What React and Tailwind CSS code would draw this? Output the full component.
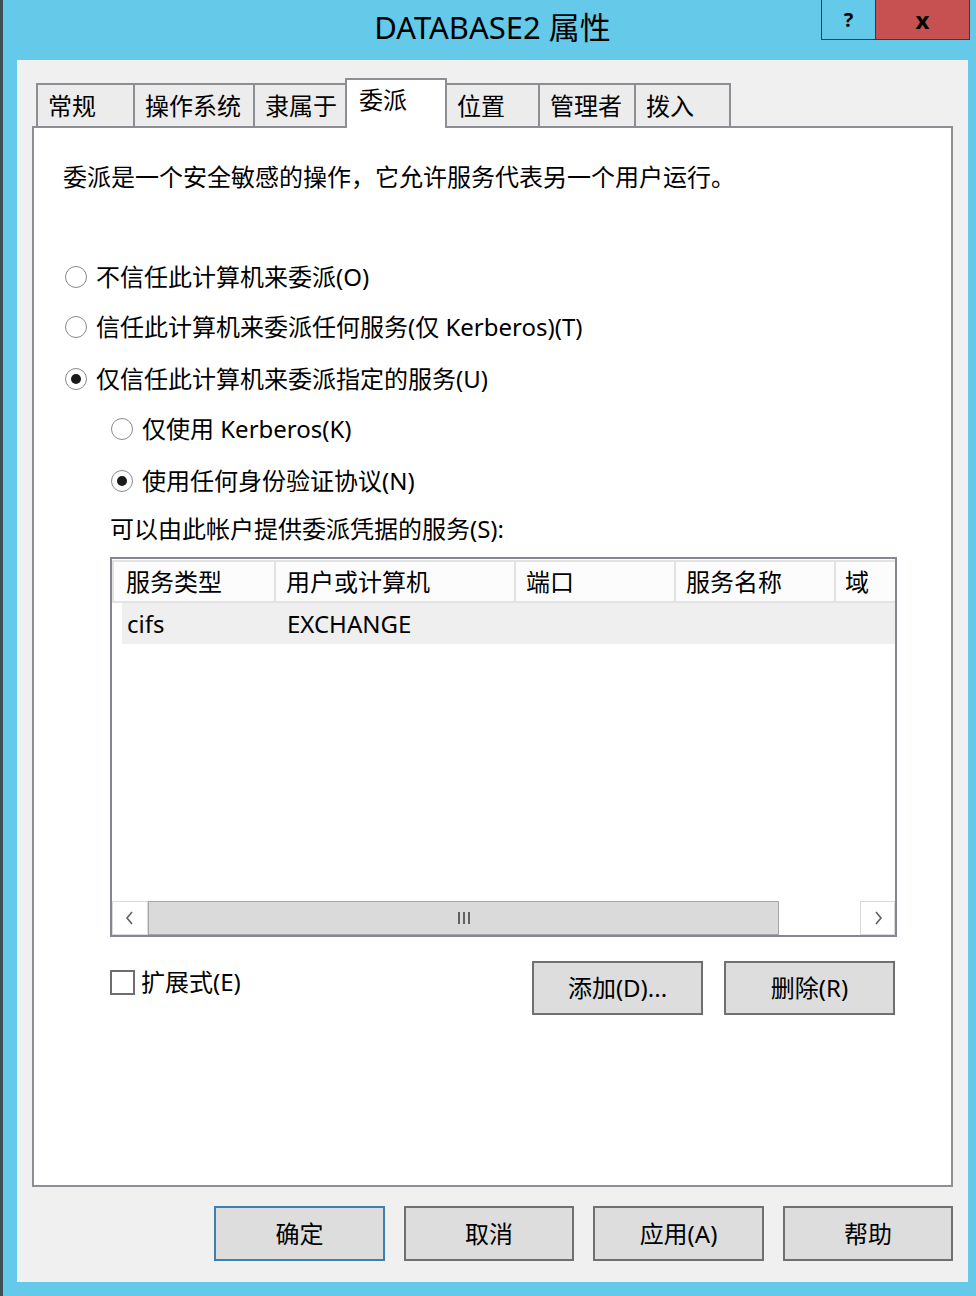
import React from "react";

const tabs = [
  { label: "常规", w: "w-[97px]" },
  { label: "操作系统", w: "w-[120px]" },
  { label: "隶属于", w: "w-[92px]" },
  { label: "委派", w: "w-[102px]", active: true },
  { label: "位置", w: "w-[93px]" },
  { label: "管理者", w: "w-[96px]" },
  { label: "拨入", w: "w-[97px]", last: true },
];

const columns = [
  { label: "服务类型", w: "w-[162px]", pl: "pl-[12px]" },
  { label: "用户或计算机", w: "w-[240px]", pl: "pl-[10px]" },
  { label: "端口", w: "w-[160px]", pl: "pl-[10px]" },
  { label: "服务名称", w: "w-[160px]", pl: "pl-[10px]" },
  { label: "域", w: "flex-1", pl: "pl-[9px]" },
];

const Radio = ({ checked }) => (
  <span className="w-[22px] h-[22px] rounded-full border-[1.5px] border-[#8a8a8a] bg-white flex items-center justify-center shrink-0">
    {checked && <span className="w-[10px] h-[10px] rounded-full bg-[#1a1a1a]" />}
  </span>
);

const RadioRow = ({ checked, label, indent, className = "" }) => (
  <div className={`h-[50px] flex items-center ${indent ? "pl-[46px]" : ""} ${className}`}>
    <Radio checked={checked} />
    <span className="ml-[9px]">{label}</span>
  </div>
);

const Button = ({ children, w = "w-[171px]", h = "h-[54px]", focus }) => (
  <div
    className={`${w} ${h} bg-[#dddddd] border-2 ${focus ? "border-[#3c7fb1]" : "border-[#707070]"} flex items-center justify-center`}
  >
    {children}
  </div>
);

const Chevron = ({ dir }) => (
  <svg width="10" height="16" viewBox="0 0 10 16">
    <polyline
      points={dir === "left" ? "7,2 2,8 7,14" : "3,2 8,8 3,14"}
      fill="none"
      stroke="#606060"
      strokeWidth="1.6"
    />
  </svg>
);

export default function App() {
  return (
    <div className="w-[976px] h-[1296px] bg-[#65c9e9] border-l-[3px] border-[#3d4f57] text-black [font-family:'Noto_Sans','Noto_Sans_CJK_SC',sans-serif] text-[24px] leading-[32px] overflow-hidden">
      {/* title bar */}
      <div className="relative h-[60px] flex items-center justify-center">
        <span className="text-[31px] leading-[40px] -mt-[6px] ml-[6px]">DATABASE2 属性</span>
        <div className="absolute top-0 right-[6px] flex h-[40px] border border-t-0 border-[#3a3a3a]">
          <div className="w-[54px] flex items-center justify-center font-bold text-[20px] border-r border-[#3a3a3a]">?</div>
          <div className="w-[93px] bg-[#c75050] flex items-center justify-center font-bold text-[24px]">x</div>
        </div>
      </div>

      {/* client area */}
      <div className="ml-[14px] w-[951px] h-[1222px] bg-[#f0f0f0] px-[15px] pt-[18px]">
        {/* tabs */}
        <div className="flex items-end h-[50px] pl-[4px]">
          {tabs.map((t) =>
            t.active ? (
              <div
                key={t.label}
                className={`${t.w} h-[50px] relative z-10 bg-white border-2 border-b-0 border-[#8c8e94] -mr-[2px] pl-[12px] pt-[4px]`}
              >
                {t.label}
              </div>
            ) : (
              <div
                key={t.label}
                className={`${t.w} h-[43px] mb-[2px] bg-[#ececec] border-t-2 border-l-2 ${t.last ? "border-r-2" : ""} border-[#8c8e94] pl-[10px] pt-[5px]`}
              >
                {t.label}
              </div>
            )
          )}
        </div>

        {/* panel */}
        <div className="-mt-[2px] h-[1061px] bg-white border-2 border-[#8c8e94] pl-[31px] pt-[33px]">
          <div className="-ml-[2px]">委派是一个安全敏感的操作，它允许服务代表另一个用户运行。</div>

          <div className="mt-[59px]">
            <RadioRow label="不信任此计算机来委派(O)" />
            <RadioRow label="信任此计算机来委派任何服务(仅 Kerberos)(T)" />
            <RadioRow checked label="仅信任此计算机来委派指定的服务(U)" className="mt-[2px]" />
            <RadioRow indent label="仅使用 Kerberos(K)" />
            <RadioRow indent checked label="使用任何身份验证协议(N)" className="mt-[2px]" />
            <div className="h-[46px] flex items-center pl-[45px]">可以由此帐户提供委派凭据的服务(S):</div>
          </div>

          {/* list view */}
          <div className="ml-[45px] mt-[5px] w-[787px] h-[380px] border-2 border-[#828790] flex flex-col">
            <div className="flex h-[43px] border-t-2 border-b-2 border-[#e3e3e3] mt-[1px]">
              {columns.map((c) => (
                <div
                  key={c.label}
                  className={`${c.w} ${c.pl} bg-[#fcfcfc] border-l-2 border-[#e3e3e3] flex items-center`}
                >
                  {c.label}
                </div>
              ))}
            </div>
            <div className="flex h-[41px] ml-[10px] bg-[#efefef] items-center">
              <div className="w-[160px] pl-[5px]">cifs</div>
              <div className="pl-[5px]">EXCHANGE</div>
            </div>
            <div className="flex-1" />
            {/* horizontal scrollbar */}
            <div className="flex h-[34px]">
              <div className="w-[36px] border border-[#dadada] bg-white flex items-center justify-center">
                <Chevron dir="left" />
              </div>
              <div className="w-[631px] bg-[#dadada] border border-[#a6a6a6] flex items-center justify-center">
                <svg width="16" height="14" viewBox="0 0 16 14">
                  <rect x="2" y="1" width="2" height="12" fill="#606060" />
                  <rect x="7" y="1" width="2" height="12" fill="#606060" />
                  <rect x="12" y="1" width="2" height="12" fill="#606060" />
                </svg>
              </div>
              <div className="w-[81px] bg-white" />
              <div className="flex-1 border border-[#dadada] bg-white flex items-center justify-center">
                <Chevron dir="right" />
              </div>
            </div>
          </div>

          <div className="ml-[45px] w-[787px] mt-[24px] flex items-center justify-between pr-[2px]">
            <div className="flex items-center mb-[12px]">
              <span className="w-[25px] h-[25px] border-2 border-[#6e6e6e] bg-white" />
              <span className="ml-[6px]">扩展式(E)</span>
            </div>
            <div className="flex gap-[21px]">
              <Button>添加(D)...</Button>
              <Button>删除(R)</Button>
            </div>
          </div>
        </div>

        {/* dialog buttons */}
        <div className="mt-[19px] flex justify-end gap-[19px]">
          <Button h="h-[55px]" focus>确定</Button>
          <Button w="w-[170px]" h="h-[55px]">取消</Button>
          <Button h="h-[55px]">应用(A)</Button>
          <Button w="w-[170px]" h="h-[55px]">帮助</Button>
        </div>
      </div>
    </div>
  );
}
